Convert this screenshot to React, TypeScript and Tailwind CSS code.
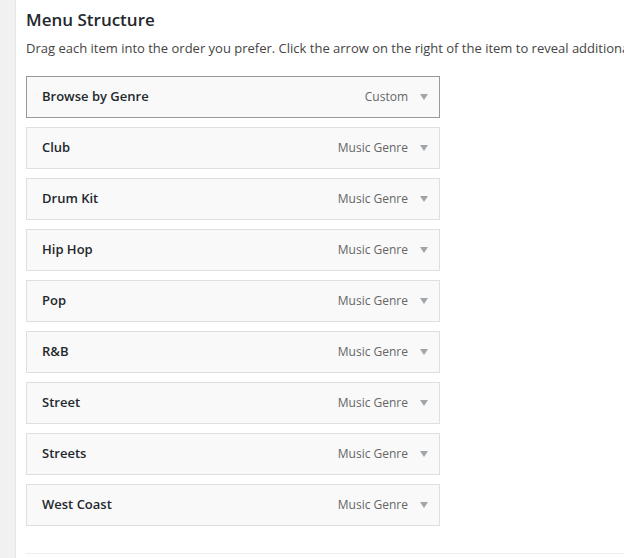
const ITEMS = [
  { title: "Browse by Genre", type: "Custom", active: true },
  { title: "Club", type: "Music Genre" },
  { title: "Drum Kit", type: "Music Genre" },
  { title: "Hip Hop", type: "Music Genre" },
  { title: "Pop", type: "Music Genre" },
  { title: "R&B", type: "Music Genre" },
  { title: "Street", type: "Music Genre" },
  { title: "Streets", type: "Music Genre" },
  { title: "West Coast", type: "Music Genre" },
];

function MenuItem({ title, type, active }: { title: string; type: string; active?: boolean }) {
  return (
    <li
      className={`flex h-[42px] w-[414px] items-center justify-between border bg-[#f9f9f9] pl-[15px] pr-[11px] ${
        active ? "border-[#999]" : "border-[#dfdfdf]"
      }`}
    >
      <span className="text-[13px] font-semibold text-[#23282d]">{title}</span>
      <span className="flex items-center gap-[12px]">
        <span className="text-[12px] text-[#666]">{type}</span>
        <svg width="8" height="6" viewBox="0 0 8 6" className="text-[#a0a5aa]">
          <path d="M0 0h8L4 6z" fill="currentColor" />
        </svg>
      </span>
    </li>
  );
}

export default function App() {
  return (
    <div className="flex h-[558px] w-[624px] overflow-hidden bg-white font-['Open_Sans',sans-serif]">
      {/* admin sidebar edge */}
      <div className="w-[16px] shrink-0 border-r border-[#e5e5e5] bg-[#f1f1f1]" />

      <div className="flex min-w-0 flex-1 flex-col overflow-hidden pl-[10px] pt-[7px]">
        <h3 className="text-[17px] font-semibold leading-[26px] text-[#23282d]">Menu Structure</h3>
        <p className="mt-[5px] whitespace-nowrap text-[13px] leading-[20px] text-[#444]">
          Drag each item into the order you prefer. Click the arrow on the right of the item to reveal additional configuration options.
        </p>

        <ul className="mt-[18px] flex flex-col gap-[9px]">
          {ITEMS.map((item) => (
            <MenuItem key={item.title} {...item} />
          ))}
        </ul>

        <div className="mt-[27px] border-t border-[#eee]" />
      </div>
    </div>
  );
}
